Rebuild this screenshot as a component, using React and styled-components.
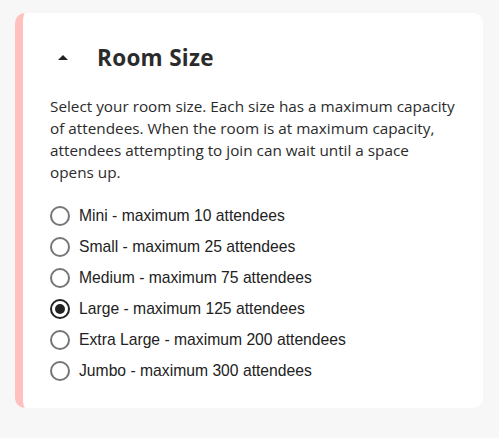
import React, { useState } from 'react';
import styled, { createGlobalStyle } from 'styled-components';

const GlobalStyle = createGlobalStyle`
  body {
    margin: 0;
    background: #f7f7f7;
  }
`;

const Page = styled.div`
  padding: 13px 16px 31px 15px;
`;

const Card = styled.section`
  background: #fff;
  border-radius: 10px;
  border-left: 8px solid #ffc0c0;
  padding: 26px 20px 26px 27px;
  min-height: 342px;
`;

const Header = styled.div`
  display: flex;
  align-items: center;
  gap: 29px;
  padding-left: 8px;
  height: 36px;
`;

const Caret = styled.span`
  width: 0;
  height: 0;
  border-left: 5px solid transparent;
  border-right: 5px solid transparent;
  border-bottom: 5px solid #222;
`;

const Title = styled.h2`
  margin: 0;
  font-family: "Open Sans", Lato, sans-serif;
  font-weight: 700;
  font-size: 22.5px;
  letter-spacing: 0.3px;
  color: #2b2b2b;
`;

const Description = styled.p`
  margin: 20px 0 0;
  max-width: 420px;
  font-family: "Open Sans", Lato, sans-serif;
  font-size: 15.3px;
  line-height: 22px;
  color: #2b2b2b;
`;

const Options = styled.div`
  margin-top: 23px;
  display: flex;
  flex-direction: column;
  gap: 10.5px;
`;

const Option = styled.label`
  display: flex;
  align-items: center;
  gap: 9px;
  height: 20.5px;
  font-family: "Liberation Sans", Arial, sans-serif;
  font-size: 15.7px;
  color: #222;
  cursor: pointer;
`;

const Radio = styled.span`
  box-sizing: border-box;
  width: 20px;
  height: 20px;
  border-radius: 50%;
  border: ${p => (p.$checked ? '2.5px solid #222' : '2px solid #767676')};
  display: flex;
  align-items: center;
  justify-content: center;
  &::after {
    content: '';
    display: ${p => (p.$checked ? 'block' : 'none')};
    width: 10px;
    height: 10px;
    border-radius: 50%;
    background: #222;
  }
`;

const sizes = [
  { name: 'Mini', max: 10 },
  { name: 'Small', max: 25 },
  { name: 'Medium', max: 75 },
  { name: 'Large', max: 125 },
  { name: 'Extra Large', max: 200 },
  { name: 'Jumbo', max: 300 },
];

export default function App() {
  const [selected, setSelected] = useState('Large');

  return (
    <Page>
      <GlobalStyle />
      <Card>
        <Header>
          <Caret />
          <Title>Room Size</Title>
        </Header>
        <Description>
          Select your room size. Each size has a maximum capacity
          <br />
          of attendees. When the room is at maximum capacity,
          <br />
          attendees attempting to join can wait until a space
          <br />
          opens up.
        </Description>
        <Options>
          {sizes.map(s => (
            <Option key={s.name} onClick={() => setSelected(s.name)}>
              <Radio $checked={selected === s.name} />
              {s.name} - maximum {s.max} attendees
            </Option>
          ))}
        </Options>
      </Card>
    </Page>
  );
}
